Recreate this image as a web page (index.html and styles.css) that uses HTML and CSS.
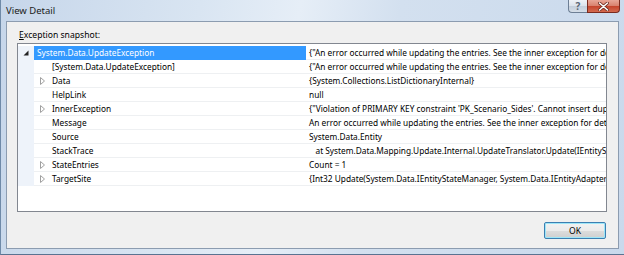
FILE: index.html
```html
<!DOCTYPE html>
<html lang="en">
<head>
  <meta charset="UTF-8" />
  <title>View Detail</title>
  <link rel="stylesheet" href="styles.css">
</head>
<body>
  <div class="window">
    <!-- Barra de titulo -->
    <div class="titlebar">
      <span class="title">View Detail</span>
      <div class="caption-buttons">
        <div class="cap-btn help">?</div>
        <div class="cap-btn close">
          <svg width="11" height="9" viewBox="0 0 11 9">
            <path d="M1.5 1 L9.5 8 M9.5 1 L1.5 8" stroke="#6b2a1e" stroke-width="3" stroke-linecap="round"/>
            <path d="M1.5 1 L9.5 8 M9.5 1 L1.5 8" stroke="#fff" stroke-width="1.6" stroke-linecap="round"/>
          </svg>
        </div>
      </div>
    </div>

    <!-- Area cliente -->
    <div class="client">
      <div class="label"><u>E</u>xception snapshot:</div>

      <div class="tree">
        <div class="row selected">
          <div class="gutter">
            <svg width="6" height="6" viewBox="0 0 6 6"><path d="M5.5 0.5 L5.5 5.5 L0.5 5.5 Z" fill="#222"/></svg>
          </div>
          <div class="name">System.Data.UpdateException</div>
          <div class="value">{"An error occurred while updating the entries. See the inner exception for details."}</div>
        </div>
        <div class="row">
          <div class="gutter"></div>
          <div class="name child"><span class="toggle"></span>[System.Data.UpdateException]</div>
          <div class="value">{"An error occurred while updating the entries. See the inner exception for details."}</div>
        </div>
        <div class="row">
          <div class="gutter"></div>
          <div class="name child"><span class="toggle"><svg width="5" height="8" viewBox="0 0 5 8"><path d="M0.5 0.5 L4.5 4 L0.5 7.5 Z" fill="#fff" stroke="#a0a0a0"/></svg></span>Data</div>
          <div class="value">{System.Collections.ListDictionaryInternal}</div>
        </div>
        <div class="row">
          <div class="gutter"></div>
          <div class="name child"><span class="toggle"></span>HelpLink</div>
          <div class="value">null</div>
        </div>
        <div class="row">
          <div class="gutter"></div>
          <div class="name child"><span class="toggle"><svg width="5" height="8" viewBox="0 0 5 8"><path d="M0.5 0.5 L4.5 4 L0.5 7.5 Z" fill="#fff" stroke="#a0a0a0"/></svg></span>InnerException</div>
          <div class="value">{"Violation of PRIMARY KEY constraint 'PK_Scenario_Sides'. Cannot insert duplicate key in object 'dbo.Scenario_Sides'."}</div>
        </div>
        <div class="row">
          <div class="gutter"></div>
          <div class="name child"><span class="toggle"></span>Message</div>
          <div class="value">An error occurred while updating the entries. See the inner exception for details.</div>
        </div>
        <div class="row">
          <div class="gutter"></div>
          <div class="name child"><span class="toggle"></span>Source</div>
          <div class="value">System.Data.Entity</div>
        </div>
        <div class="row">
          <div class="gutter"></div>
          <div class="name child"><span class="toggle"></span>StackTrace</div>
          <div class="value">   at System.Data.Mapping.Update.Internal.UpdateTranslator.Update(IEntityStateManager stateManager, IEntityAdapter adapter)</div>
        </div>
        <div class="row">
          <div class="gutter"></div>
          <div class="name child"><span class="toggle"><svg width="5" height="8" viewBox="0 0 5 8"><path d="M0.5 0.5 L4.5 4 L0.5 7.5 Z" fill="#fff" stroke="#a0a0a0"/></svg></span>StateEntries</div>
          <div class="value">Count = 1</div>
        </div>
        <div class="row">
          <div class="gutter"></div>
          <div class="name child"><span class="toggle"><svg width="5" height="8" viewBox="0 0 5 8"><path d="M0.5 0.5 L4.5 4 L0.5 7.5 Z" fill="#fff" stroke="#a0a0a0"/></svg></span>TargetSite</div>
          <div class="value">{Int32 Update(System.Data.IEntityStateManager, System.Data.IEntityAdapter)}</div>
        </div>
      </div>

      <div class="actions">
        <button class="ok-button">OK</button>
      </div>
    </div>
  </div>
</body>
</html>
```

FILE: styles.css
```css
/* Estilos generales */
body {
  margin: 0;
  padding: 0;
  font-family: "Noto Sans", "Open Sans", sans-serif;
  font-size: 8.3px;
  color: #000;
  background-color: #fff;
}

/* Marco de la ventana */
.window {
  width: 624px;
  height: 255px;
  box-sizing: border-box;
  padding: 0 5px 5px 5px;
  display: flex;
  flex-direction: column;
  background: linear-gradient(100deg, #c6d6ea 0%, #d9e5f2 30%, #e6eef7 45%, #d3e0ef 60%, #c9d9ec 100%);
  border-left: 1px solid #6f8aa8;
  border-bottom: 1px solid #5a7391;
}

/* Barra de titulo */
.titlebar {
  height: 21px;
  display: flex;
  align-items: flex-start;
  justify-content: space-between;
}

.title {
  margin-top: 4px;
  font-size: 9.5px;
  color: #1a1a1a;
}

.caption-buttons {
  display: flex;
  margin-right: -1px;
}

.cap-btn {
  height: 13px;
  box-sizing: border-box;
  border: 1px solid #6d7f95;
  border-top: none;
  display: flex;
  align-items: center;
  justify-content: center;
}

.help {
  width: 19px;
  border-right: none;
  border-bottom-left-radius: 4px;
  background: linear-gradient(#eef2f7 0%, #dbe3ec 50%, #c3cedb 51%, #d5dee8 100%);
  color: #5a6675;
  font-size: 10px;
  font-weight: bold;
}

.close {
  width: 33px;
  border-color: #7a2b1f;
  border-bottom-right-radius: 4px;
  background: linear-gradient(#e8a697 0%, #d8806c 50%, #c5432b 51%, #d36a4f 100%);
}

/* Area cliente */
.client {
  flex: 1;
  background-color: #f0f0f0;
  border: 1px solid #8c9cb0;
  display: flex;
  flex-direction: column;
}

.label {
  margin: 6px 0 0 12px;
  height: 15px;
  line-height: 15px;
  font-size: 8.6px;
}

.label u {
  text-decoration: underline;
}

/* Arbol de la excepcion */
.tree {
  margin: 0 11px 0 10px;
  height: 169px;
  box-sizing: border-box;
  border: 1px solid #828790;
  background-color: #fff;
  padding-top: 2px;
}

.row {
  display: grid;
  grid-template-columns: 16px 272px 1fr;
  height: 14px;
}

.gutter {
  background-color: #eef3fa;
  display: flex;
  align-items: center;
  justify-content: center;
}

.name,
.value {
  line-height: 13px;
  white-space: pre;
  overflow: hidden;
  border-bottom: 1px solid #eef0f2;
}

.name {
  padding-left: 3px;
  display: flex;
  align-items: center;
}

.name.child {
  padding-left: 6px;
}

.toggle {
  width: 12px;
  flex: none;
  display: flex;
  align-items: center;
}

.value {
  padding-left: 3px;
}

.row.selected .name {
  background-color: #3399ff;
  color: #fff;
  border-bottom-color: #3399ff;
}

/* Botones */
.actions {
  display: flex;
  justify-content: flex-end;
  margin: 10px 12px 0 0;
}

.ok-button {
  width: 62px;
  height: 17px;
  padding: 0;
  font-family: inherit;
  font-size: 8.6px;
  color: #000;
  border: 1px solid #3c7fb1;
  border-radius: 2px;
  box-shadow: inset 0 0 0 1px #9ee6f8;
  background: linear-gradient(#f2f2f2 0%, #ebebeb 50%, #dddddd 51%, #cfcfcf 100%);
}
```
